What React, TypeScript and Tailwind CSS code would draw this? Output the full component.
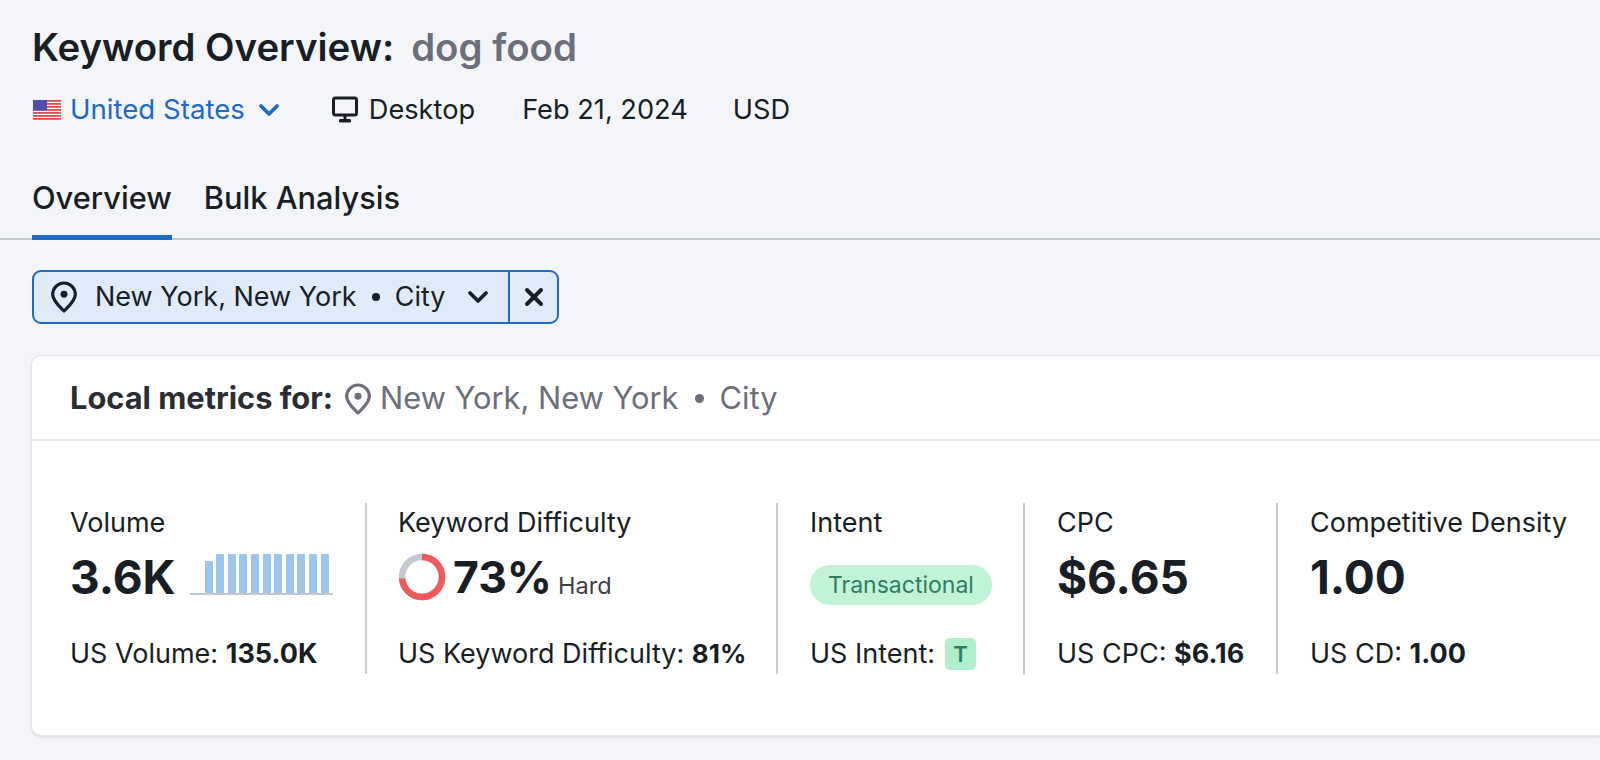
import { ChevronDown, X } from "lucide-react";

function Pin({ className }: { className: string }) {
  return (
    <svg viewBox="0 0 24 24" fill="none" stroke="currentColor" strokeWidth="2.4" className={className}>
      <path d="M12 22.5c-1 -1.2 -8.5 -7 -8.5 -12.5a8.5 8.5 0 0 1 17 0c0 5.5 -7.5 11.3 -8.5 12.5z" strokeLinejoin="round" />
      <circle cx="12" cy="10" r="2.6" fill="currentColor" stroke="none" />
    </svg>
  );
}

function Flag() {
  return (
    <svg viewBox="0 0 28 20" className="ml-[1px] h-[20px] w-[28px]">
      <rect width="28" height="20" fill="#fff" />
      {[0, 3, 6, 9, 12, 15, 18].map((y) => (
        <rect key={y} y={y} width="28" height="1.8" fill="#e8484d" />
      ))}
      <rect width="14" height="10.5" fill="#4d50b0" />
    </svg>
  );
}

function Monitor() {
  return (
    <svg viewBox="0 0 28 28" fill="none" className="h-[28px] w-[28px]">
      <rect x="2.5" y="2" width="23" height="17" rx="2" stroke="#181e25" strokeWidth="3" />
      <rect x="12.5" y="20" width="3" height="4" fill="#181e25" />
      <rect x="8" y="23" width="12" height="3.6" rx="1.4" fill="#181e25" />
    </svg>
  );
}

function VolumeBars() {
  const bars = [32, 39, 39, 39, 39, 39, 39, 39, 39, 39, 39];
  return (
    <div className="-mt-[6px] ml-[14px] flex h-[41px] w-[143px] items-end gap-[3.6px] border-b-2 border-[#c4c7cf] pl-[15px] pr-[4px]">
      {bars.map((h, i) => (
        <div key={i} className="w-[8px] rounded-t-[1px] bg-[#9cc6ee]" style={{ height: h }} />
      ))}
    </div>
  );
}

function Donut() {
  return (
    <svg viewBox="0 0 48 48" className="h-[48px] w-[48px]">
      <circle cx="24" cy="24" r="20" fill="none" stroke="#c4c7cf" strokeWidth="6.5" />
      <circle
        cx="24"
        cy="24"
        r="20"
        fill="none"
        stroke="#ef5a5d"
        strokeWidth="6.5"
        strokeDasharray="92 126"
        transform="rotate(-90 24 24)"
      />
    </svg>
  );
}

function Metric({
  label,
  width,
  main,
  foot,
  last,
}: {
  label: string;
  width: string;
  main: React.ReactNode;
  foot: React.ReactNode;
  last?: boolean;
}) {
  return (
    <div className={`${width} ${last ? "" : "border-r-2 border-[#c9cbd3]"} flex h-[171px] shrink-0 flex-col pt-[1px] text-[27px]`}>
      <div className="h-[38px] leading-[38px]">{label}</div>
      <div className="flex h-[70px] items-center">{main}</div>
      <div className="mt-[23px] leading-[38px] whitespace-nowrap">{foot}</div>
    </div>
  );
}

export default function App() {
  return (
    <div
      className="h-[760px] w-[1600px] overflow-hidden bg-[#f4f5f9] pt-[25px] text-[27.2px] text-[#181e25]"
      style={{ fontFamily: "Inter, sans-serif" }}
    >
      <div className="px-[32px]">
        <h1 className="flex h-[46px] items-center text-[38.4px] font-semibold">
          Keyword Overview:
          <span className="ml-[17px] text-[#6c6e79]">dog food</span>
        </h1>
        <div className="mt-[19px] flex h-[40px] items-center">
          <Flag />
          <span className="ml-[9px] text-[27.6px] text-[#1d6ac9]">United States</span>
          <ChevronDown className="ml-[8px] h-[32px] w-[32px] text-[#1d6ac9]" strokeWidth={2.8} />
          <span className="ml-[46px]"><Monitor /></span>
          <span className="ml-[10px]">Desktop</span>
          <span className="ml-[47px]">Feb 21, 2024</span>
          <span className="ml-[45px]">USD</span>
        </div>
      </div>

      <div className="mt-[41px] flex h-[69px] gap-[32px] border-b-2 border-[#c9cbd3] px-[32px] text-[30.8px] font-medium">
        <div className="-mb-[2px] border-b-[5px] border-[#1d6ac9] pt-[4px]">Overview</div>
        <div className="pt-[4px]">Bulk Analysis</div>
      </div>

      <div className="mt-[30px] px-[32px]">
        <div className="flex h-[54px] w-[527px] items-center rounded-[9px] border-2 border-[#1d6ac9] bg-[#e0eaf9] text-[27px]">
          <div className="flex h-full flex-1 items-center border-r-2 border-[#1d6ac9] pl-[14px]">
            <Pin className="h-[32px] w-[32px]" />
            <span className="ml-[15px]">New York, New York</span>
            <span className="mx-[15px] h-[8px] w-[8px] rounded-full bg-[#181e25]" />
            <span>City</span>
            <ChevronDown className="ml-[17px] h-[32px] w-[32px]" strokeWidth={2.8} />
          </div>
          <div className="flex w-[47px] justify-center">
            <X className="h-[28px] w-[28px]" strokeWidth={3.4} />
          </div>
        </div>
      </div>

      <div className="ml-[31px] mt-[31px] h-[381px] rounded-l-[10px] border border-r-0 border-[#e4e6ec] bg-white shadow-[0_1px_3px_rgba(0,0,0,0.12)]">
        <div className="flex h-[85px] items-center border-b-2 border-[#e4e6ec] pl-[38px] pt-[2px] text-[30.8px] text-[#6c6e79]">
          <span className="font-bold text-[#2b2d33]">Local metrics for:</span>
          <Pin className="ml-[9px] h-[32px] w-[32px]" />
          <span className="ml-[6px]">New York, New York</span>
          <span className="mx-[16px] h-[9px] w-[9px] rounded-full bg-[#6c6e79]" />
          <span>City</span>
        </div>
        <div className="flex pl-[38px] pt-[62px]">
          <Metric
            label="Volume"
            width="w-[297px]"
            main={
              <>
                <span className="text-[46px] font-bold">3.6K</span>
                <VolumeBars />
              </>
            }
            foot={<>US Volume: <b className="font-bold">135.0K</b></>}
          />
          <Metric
            label="Keyword Difficulty"
            width="w-[411px] pl-[31px]"
            main={
              <>
                <Donut />
                <span className="ml-[7px] text-[44.5px] font-bold">73%</span>
                <span className="ml-[6px] mt-[18px] text-[23.5px] text-[#3d3f47]">Hard</span>
              </>
            }
            foot={<>US Keyword Difficulty: <b className="text-[26px] font-bold">81%</b></>}
          />
          <Metric
            label="Intent"
            width="w-[247px] pl-[32px]"
            main={
              <span className="mt-[16px] rounded-[20px] bg-[#c1f3d7] px-[18px] py-[3px] text-[23px] text-[#2f7d63]">
                Transactional
              </span>
            }
            foot={
              <span className="flex items-center">
                US Intent:
                <span className="ml-[10px] flex h-[32px] w-[31px] items-center justify-center rounded-[5px] bg-[#b0efcc] text-[22px] font-semibold text-[#2f7d63]">T</span>
              </span>
            }
          />
          <Metric
            label="CPC"
            width="w-[253px] pl-[32px]"
            main={<span className="text-[46px] font-bold">$6.65</span>}
            foot={<>US CPC: <b className="font-bold">$6.16</b></>}
          />
          <Metric
            label="Competitive Density"
            width="pl-[32px]"
            last
            main={<span className="text-[46px] font-bold">1.00</span>}
            foot={<>US CD: <b className="font-bold">1.00</b></>}
          />
        </div>
      </div>
    </div>
  );
}
